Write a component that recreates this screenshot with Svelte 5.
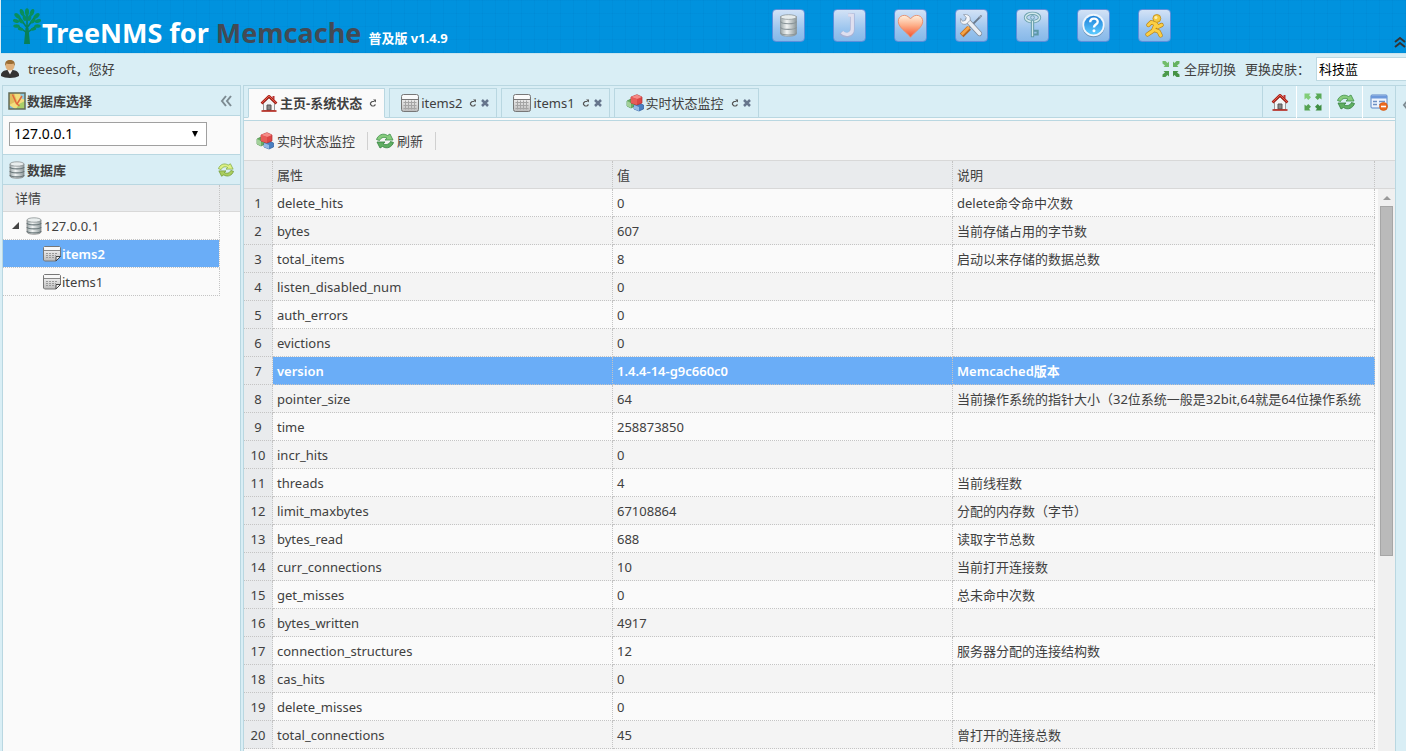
<script lang="ts">
  interface Row {
    name: string;
    value: string;
    note: string;
  }

  const rows: Row[] = [
    { name: "delete_hits", value: "0", note: "delete命令命中次数" },
    { name: "bytes", value: "607", note: "当前存储占用的字节数" },
    { name: "total_items", value: "8", note: "启动以来存储的数据总数" },
    { name: "listen_disabled_num", value: "0", note: "" },
    { name: "auth_errors", value: "0", note: "" },
    { name: "evictions", value: "0", note: "" },
    { name: "version", value: "1.4.4-14-g9c660c0", note: "Memcached版本" },
    { name: "pointer_size", value: "64", note: "当前操作系统的指针大小（32位系统一般是32bit,64就是64位操作系统" },
    { name: "time", value: "258873850", note: "" },
    { name: "incr_hits", value: "0", note: "" },
    { name: "threads", value: "4", note: "当前线程数" },
    { name: "limit_maxbytes", value: "67108864", note: "分配的内存数（字节）" },
    { name: "bytes_read", value: "688", note: "读取字节总数" },
    { name: "curr_connections", value: "10", note: "当前打开连接数" },
    { name: "get_misses", value: "0", note: "总未命中次数" },
    { name: "bytes_written", value: "4917", note: "" },
    { name: "connection_structures", value: "12", note: "服务器分配的连接结构数" },
    { name: "cas_hits", value: "0", note: "" },
    { name: "delete_misses", value: "0", note: "" },
    { name: "total_connections", value: "45", note: "曾打开的连接总数" },
  ];

  const shortcuts = [
    { icon: "bigdb", label: "数据库" },
    { icon: "json", label: "JSON" },
    { icon: "heart", label: "收藏" },
    { icon: "tools", label: "配置" },
    { icon: "key", label: "密码" },
    { icon: "help", label: "帮助" },
    { icon: "exit", label: "退出" },
  ];

  const tabs = [
    { icon: "home", title: "主页-系统状态", closable: false },
    { icon: "table", title: "items2", closable: true },
    { icon: "table", title: "items1", closable: true },
    { icon: "cubes", title: "实时状态监控", closable: true },
  ];

  const tabTools = [
    { icon: "home", label: "主页" },
    { icon: "expand", label: "全屏" },
    { icon: "refresh", label: "刷新" },
    { icon: "closeform", label: "关闭" },
  ];

  let activeTab = $state(0);
  let selected = $state(6);
  let treeNode = $state("items2");
</script>

{#snippet icon(name: string)}
  {#if name === "home"}
    <svg class="icon" viewBox="0 0 18 18">
      <path d="M3.500 9v7.500h11V9L9 4z" fill="#f4f4f4" stroke="#999" />
      <path d="M12.500 2h2v4l-2-2z" fill="#b33" />
      <path d="M1.500 9.500L9 2.300l7.500 7.200" fill="none" stroke="#a51d14" stroke-width="2.600" stroke-linejoin="round" />
      <path d="M2 8.800L9 2.100l7 6.700" fill="none" stroke="#e8604f" stroke-width="1" />
      <path d="M7 16V11h4v5z" fill="#888" stroke="#555" />
      <path d="M1.500 17h15" stroke="#b4251b" stroke-width="1.600" />
    </svg>
  {:else if name === "table"}
    <svg class="icon" viewBox="0 0 18 18">
      <rect x=".5" y=".5" width="17" height="17" rx="2" fill="url(#silver)" stroke="#777" />
      <rect x="2" y="1.500" width="14" height="3.500" fill="#fafafa" />
      <path d="M1 5.500h16" stroke="#777" />
      <path d="M2.500 8.500h13M2.500 11.500h13M2.500 14.500h13M4.500 6.500v9M7.500 6.500v9M10.500 6.500v9M13.500 6.500v9" stroke="#a5a5a5" />
    </svg>
  {:else if name === "sheet"}
    <svg class="icon" viewBox="0 0 18 18">
      <path d="M1.500 1.500h15l1 1v9l-4.500 4.500H1.500l-1-1V2.500z" fill="url(#silver)" stroke="#777" />
      <path d="M2 2h14v3H2z" fill="#f8f8f8" />
      <path d="M1 5.500h16" stroke="#888" />
      <path d="M3 8.500h11M3 10.500h10M3 12.500h8" stroke="#999" stroke-dasharray="2 1" />
      <path d="M17.500 11.500h-4.500v4.500z" fill="#eee" stroke="#444" />
    </svg>
  {:else if name === "cubes"}
    <svg class="icon" viewBox="0 0 18 18">
      <path d="M1 7l4-2 4 2v5l-4 2-4-2z" fill="#69ad62" stroke="#458944" stroke-width=".7" />
      <path d="M1 7l4 2v5l-4-2z" fill="#a3d19a" />
      <path d="M8 11l5-2 4.500 2v4L13 17l-5-2z" fill="#4a7fc2" stroke="#2c5b9c" stroke-width=".7" />
      <path d="M8 11l5 2v4l-5-2z" fill="#94b9e5" />
      <path d="M5 3l6-2.300L16 3v6l-5 2-6-2z" fill="#dc4646" stroke="#b13131" stroke-width=".7" />
      <path d="M5 3l6 2 5-2-5-2.300z" fill="#f58b87" />
      <path d="M5 3l6 2v6L5 9z" fill="#e75c58" />
    </svg>
  {:else if name === "refresh" || name === "reload"}
    <svg class="icon" class:lime={name === "reload"} viewBox="0 0 18 18">
      <path d="M.500 7.500C2 3 7 .500 11.500 3.500l2.500-1.500L17 8H9l2-1.700C8 4.500 5 5.500 3.500 8.500z" fill="#86cb7c" stroke="#3e8f49" stroke-width=".8" stroke-linejoin="round" />
      <path d="M17.500 10.500C16 15 11 17.500 6.500 14.500L4 16 1 10h8l-2 1.700c3 1.800 6 .8 7.500-2.200z" fill="#5fae62" stroke="#34823f" stroke-width=".8" stroke-linejoin="round" />
    </svg>
  {:else if name === "expand"}
    <svg class="icon" viewBox="0 0 18 18">
      <path d="M.500.500h6L5 2.300l2 2-2.700 2.700-2-2L.500 6.500z" fill="#82cd78" />
      <path d="M17.500.500h-6L13 2.300l-2 2 2.700 2.700 2-2 1.800 1.500z" fill="#5aa957" />
      <path d="M.500 17.500h6L5 15.700l2-2-2.700-2.700-2 2-1.800-1.500z" fill="#55a353" />
      <path d="M17.500 17.500h-6l1.500-1.800-2-2 2.700-2.700 2 2 1.800-1.500z" fill="#3e8d41" />
    </svg>
  {:else if name === "shrink"}
    <svg class="icon" viewBox="0 0 18 18">
      <path d="M7 7H1.500L3 5.500.500 3.500V1h3l2 2L7 1.500z" fill="#72bd6c" />
      <path d="M11 7h5.500L15 5.500l2.500-2V1h-3l-2 2L11 1.500z" fill="#66b261" />
      <path d="M7 11H1.500L3 12.500l-2.500 2V17h3l2-2L7 16.500z" fill="#4c9a4c" />
      <path d="M11 11h5.500L15 12.500l2.500 2V17h-3l-2-2-1.500 1.500z" fill="#459245" />
    </svg>
  {:else if name === "closeform"}
    <svg class="icon" viewBox="0 0 18 18">
      <rect x="1" y="2" width="16" height="13" rx="1" fill="#eef4fd" stroke="#5b86c7" />
      <path d="M1 2.500h16v3H1z" fill="#6d99db" />
      <path d="M3 8.500h4M3 11.500h4M9 8.500h6M9 11.500h4" stroke="#6c8fc4" stroke-width="1.500" />
      <circle cx="13.500" cy="13.500" r="4" fill="#ed6a1d" stroke="#d0500c" stroke-width=".6" />
      <path d="M11 13.500h5" stroke="#fff" stroke-width="1.600" />
    </svg>
  {:else if name === "db"}
    <svg class="icon" viewBox="0 0 18 18">
      <path d="M2 3v12c0 3 14 3 14 0V3z" fill="url(#steel)" stroke="#888" stroke-width=".8" />
      <path d="M2 6c0 2.500 14 2.500 14 0M2 10c0 2.500 14 2.500 14 0M2 14c0 2.500 14 2.500 14 0" fill="none" stroke="#69777a" stroke-width="1.200" />
      <ellipse cx="9" cy="3" rx="7" ry="2.200" fill="#e9eeee" stroke="#8b9394" stroke-width=".8" />
    </svg>
  {:else if name === "map"}
    <svg class="icon" viewBox="0 0 18 18">
      <path d="M1 1h16v16H1z" fill="#f2de7d" />
      <path d="M1 1h5l3 8-8 4z" fill="#e0bd5e" />
      <path d="M12 1h5v7l-4-2z" fill="#8fc9e0" />
      <path d="M17 9v8H8l3-5z" fill="#a9cf68" />
      <path d="M1 13l6 4H1z" fill="#7cb8d8" />
      <path d="M4.500 2.500l4 9 3 2.500M14 4l-5 8" fill="none" stroke="#e2683c" stroke-width="1.500" />
      <path d="M1 1h16v16H1z" fill="none" stroke="#616b58" stroke-width="1.500" />
    </svg>
  {:else if name === "user"}
    <svg class="icon" viewBox="0 0 18 18">
      <path d="M0 16c-.5-4 3-5.500 6-6h6c3 .5 6.500 2 6 6-4 2.500-14 2.500-18 0z" fill="#333" />
      <path d="M6.500 10L9 14.500l2.500-4.500z" fill="#f4f4f4" />
      <circle cx="9" cy="6" r="4.500" fill="#dfb07a" />
      <path d="M4.300 6C3.500 1.500 6 0 9 0s5.500 1.500 4.700 6l-1.200-2.500c-2 .7-5 .7-7 0z" fill="#9a6d33" />
    </svg>
  {:else if name === "bigdb"}
    <svg class="big" viewBox="0 0 33 33">
      <path d="M8 7v18c0 4 17 4 17 0V7z" fill="url(#steel)" stroke="#8c9599" stroke-width=".8" />
      <path d="M8 12c0 3.500 17 3.500 17 0M8 18c0 3.500 17 3.500 17 0M8 24c0 3.500 17 3.500 17 0" fill="none" stroke="#8a9599" stroke-width="1.200" />
      <ellipse cx="16.500" cy="7.500" rx="8.500" ry="2.500" fill="#e7ecec" stroke="#8b9394" stroke-width=".8" />
    </svg>
  {:else if name === "json"}
    <svg class="big" viewBox="0 0 33 33">
      <path d="M15 5.500h4" stroke="#a9b3d6" stroke-width="4" />
      <path d="M19.500 3.500v17c0 7-8 8-12 3.500" fill="none" stroke="#a7b2d5" stroke-width="5" />
      <path d="M15 5.500h4M19.500 4v16.500c0 6-7.500 7-11 3" fill="none" stroke="#dfdfef" stroke-width="3.500" />
    </svg>
  {:else if name === "heart"}
    <svg class="big" viewBox="0 0 33 33">
      <path d="M16.500 29C12 23 4 19 3.500 12.500 3 5.500 12 3 16.500 9.500 21 3 30 5.500 29.500 12.500 29 19 21 23 16.500 29z" fill="url(#heart)" stroke="#e8906e" />
    </svg>
  {:else if name === "tools"}
    <svg class="big" viewBox="0 0 33 33">
      <path d="M27 6L14 19" stroke="#69798c" stroke-width="2" />
      <path d="M14 19l-8 8" stroke="#b76620" stroke-width="5.500" />
      <path d="M14 18l-8 8" stroke="#f6a445" stroke-width="3" />
      <path d="M12 11l13 14" stroke="#7e8997" stroke-width="5.500" stroke-linecap="round" />
      <path d="M12 11l13 14" stroke="#e9eef4" stroke-width="4" stroke-linecap="round" />
      <path d="M8 5l3 3-1 3-3 1-2-3c-1 5 2 7 6 6l4-4c1-4-2-7-7-6z" fill="#f3f6fa" stroke="#7e8997" stroke-width=".7" />
      <path d="M28 5l-4 2 2 2z" fill="#98a6b7" />
    </svg>
  {:else if name === "key"}
    <svg class="big" viewBox="0 0 33 33">
      <ellipse cx="16.500" cy="8" rx="7.500" ry="4.500" fill="none" stroke="#6ba0ac" stroke-width="3.500" />
      <ellipse cx="16.500" cy="8" rx="7.500" ry="4.500" fill="none" stroke="#d2e8ec" stroke-width="1.600" />
      <path d="M16.500 11.500V29" stroke="#5d98a7" stroke-width="3.500" />
      <path d="M18 22h4v4h-4" fill="none" stroke="#5d98a7" stroke-width="2.200" />
      <path d="M16.500 11.500V28" stroke="#d2e8ec" stroke-width="1.400" />
      <circle cx="16.500" cy="8" r="2" fill="none" stroke="#6ba0ac" />
    </svg>
  {:else if name === "help"}
    <svg class="big" viewBox="0 0 33 33">
      <circle cx="16.500" cy="17" r="12" fill="#6d93b5" />
      <circle cx="16.500" cy="16" r="12" fill="#eef6fd" />
      <circle cx="16.500" cy="16" r="10" fill="url(#help)" />
      <path d="M13 13c0-5 8-5 8-.5 0 3-4 3-4 6" fill="none" stroke="#fff" stroke-width="2.500" />
      <circle cx="17" cy="22" r="1.600" fill="#fff" />
    </svg>
  {:else if name === "exit"}
    <svg class="big" viewBox="0 0 33 33">
      <path d="M18 15l-5-2-3 3M18 15l2 3 4-2M18 15l-3 7-6 4M16 21l5 2 2 4" fill="none" stroke="#b98316" stroke-width="4.600" stroke-linecap="round" stroke-linejoin="round" />
      <circle cx="19" cy="9" r="4.200" fill="#f5ca3d" stroke="#b98316" stroke-width=".8" />
      <path d="M18 15l-5-2-3 3M18 15l2 3 4-2M18 15l-3 7-6 4M16 21l5 2 2 4" fill="none" stroke="#fbcf45" stroke-width="3.200" stroke-linecap="round" stroke-linejoin="round" />
      <circle cx="18" cy="8" r="1.600" fill="#fdeeb0" />
    </svg>
  {/if}
{/snippet}

<svg class="defs" aria-hidden="true">
  <defs>
    <linearGradient id="silver" x2="0" y2="1">
      <stop stop-color="#fff" /><stop offset="1" stop-color="#bbb" />
    </linearGradient>
    <linearGradient id="steel">
      <stop stop-color="#9ba6a8" /><stop offset=".4" stop-color="#f1f4f4" /><stop offset="1" stop-color="#8c9799" />
    </linearGradient>
    <linearGradient id="heart" x2="0" y2="1">
      <stop stop-color="#fff0dd" /><stop offset=".45" stop-color="#fdb08a" /><stop offset="1" stop-color="#f4512c" />
    </linearGradient>
    <linearGradient id="help" x2="0" y2="1">
      <stop stop-color="#1d7fd8" /><stop offset="1" stop-color="#5ccbff" />
    </linearGradient>
  </defs>
</svg>

<div class="app">
  <header class="banner">
    <svg class="tree" viewBox="0 0 28 36">
      <g fill="none" stroke="#088057" stroke-width="1.500">
        <path d="M14 34V14M14 25L5 18M14 25l9-7M14 20L7 10M14 20l7-10M14 14V5" />
      </g>
      <path d="M11 36l1.500-16h3L17 36z" fill="#088057" />
      <g fill="#088e5c">
        <ellipse cx="14" cy="4" rx="2" ry="3.700" />
        <ellipse cx="9" cy="4.500" rx="2" ry="3.700" transform="rotate(-20 9 4.500)" />
        <ellipse cx="19" cy="4.500" rx="2" ry="3.700" transform="rotate(20 19 4.500)" />
        <ellipse cx="4.500" cy="8" rx="2" ry="3.700" transform="rotate(-50 4.500 8)" />
        <ellipse cx="23.500" cy="8" rx="2" ry="3.700" transform="rotate(50 23.500 8)" />
        <ellipse cx="3" cy="13" rx="1.800" ry="3.200" transform="rotate(-70 3 13)" />
        <ellipse cx="25" cy="13" rx="1.800" ry="3.200" transform="rotate(70 25 13)" />
        <ellipse cx="3.500" cy="18" rx="1.800" ry="3.200" transform="rotate(-90 3.500 18)" />
        <ellipse cx="24.500" cy="18" rx="1.800" ry="3.200" transform="rotate(90 24.500 18)" />
        <ellipse cx="11.500" cy="10" rx="1.800" ry="3" transform="rotate(-15 11.500 10)" />
        <ellipse cx="16.500" cy="10" rx="1.800" ry="3" transform="rotate(15 16.500 10)" />
        <ellipse cx="8" cy="13" rx="1.800" ry="3" transform="rotate(-50 8 13)" />
        <ellipse cx="20" cy="13" rx="1.800" ry="3" transform="rotate(50 20 13)" />
        <ellipse cx="7.500" cy="21" rx="1.600" ry="2.800" transform="rotate(-80 7.500 21)" />
        <ellipse cx="20.500" cy="21" rx="1.600" ry="2.800" transform="rotate(80 20.500 21)" />
      </g>
    </svg>
    <h1>TreeNMS for <span class="product">Memcache</span> <small>普及版 v1.4.9</small></h1>
    <nav class="shortcuts">
      {#each shortcuts as s}
        <button class="shortcut" aria-label={s.label}>{@render icon(s.icon)}</button>
      {/each}
    </nav>
    <button class="fold" aria-label="收起">
      <svg viewBox="0 0 12 12"><path d="M1 6l5-4 5 4M1 11l5-4 5 4" fill="none" stroke="#333" stroke-width="2" /></svg>
    </button>
  </header>

  <div class="userbar">
    {@render icon("user")}
    <span class="hello">treesoft，您好</span>
    <button class="fullscreen">{@render icon("shrink")}全屏切换</button>
    <label for="skin">更换皮肤：</label>
    <select id="skin"><option>科技蓝</option></select>
  </div>

  <div class="body">
    <aside>
      <div class="panel-head">
        {@render icon("map")}<span>数据库选择</span>
        <button class="fold" aria-label="折叠">
          <svg viewBox="0 0 12 12"><path d="M6 1L2 6l4 5M11 1L7 6l4 5" fill="none" stroke="#7d8b92" stroke-width="2" /></svg>
        </button>
      </div>
      <div class="picker">
        <select class="host" aria-label="数据库选择"><option>127.0.0.1</option></select>
      </div>
      <div class="panel-head sub">
        {@render icon("db")}<span>数据库</span>
        <button class="fold" aria-label="刷新">{@render icon("reload")}</button>
      </div>
      <div class="tree-head"><span>详情</span></div>
      <ul class="tree-body">
        <li class="root">
          <svg class="arrow" viewBox="0 0 8 8"><path d="M8 0v8H0z" fill="#444" /></svg>
          {@render icon("db")}127.0.0.1
        </li>
        {#each ["items2", "items1"] as node}
          <li>
            <button class="leaf" class:on={treeNode === node} onclick={() => (treeNode = node)}>
              {@render icon("sheet")}{node}
            </button>
          </li>
        {/each}
      </ul>
    </aside>

    <main>
      <div class="tabbar">
        <div class="tabs">
          {#each tabs as tab, i}
            <div class="tab" class:active={activeTab === i}>
              <button class="tab-title" onclick={() => (activeTab = i)}>{@render icon(tab.icon)}{tab.title}</button>
              <button class="mini" aria-label="刷新">
                <svg viewBox="0 0 8 8"><path d="M5.500 2.500H3L1.500 4v1.500L3 7h2l1.500-1.500" fill="none" stroke="#555" stroke-width="1.200" /><path d="M4 .500h3v3z" fill="#555" /></svg>
              </button>
              {#if tab.closable}
                <button class="mini close" aria-label="关闭">
                  <svg viewBox="0 0 8 8"><path d="M1 1l6 6M7 1L1 7" stroke="#66758c" stroke-width="2.500" /></svg>
                </button>
              {/if}
            </div>
          {/each}
        </div>
        <div class="tab-tools">
          {#each tabTools as t}
            <button aria-label={t.label}>{@render icon(t.icon)}</button>
          {/each}
        </div>
      </div>

      <div class="toolbar">
        <button>{@render icon("cubes")}实时状态监控</button>
        <button>{@render icon("refresh")}刷新</button>
      </div>

      <div class="grid">
        <table>
          <colgroup>
            <col class="c-num" /><col class="c-val" /><col class="c-val" /><col />
          </colgroup>
          <thead>
            <tr><th></th><th>属性</th><th>值</th><th>说明</th></tr>
          </thead>
          <tbody>
            {#each rows as row, i}
              <tr class:on={selected === i} onclick={() => (selected = i)}>
                <td class="num">{i + 1}</td>
                <td>{row.name}</td>
                <td>{row.value}</td>
                <td>{row.note}</td>
              </tr>
            {/each}
          </tbody>
        </table>
        <div class="gutter">
          <div class="gutter-head"></div>
          <div class="scrollbar">
            <svg viewBox="0 0 8 4"><path d="M0 4l4-4 4 4z" fill="#999" /></svg>
            <div class="thumb"></div>
          </div>
        </div>
      </div>
    </main>

    <div class="east">
      <svg viewBox="0 0 12 12"><path d="M6 1L2 6l4 5M11 1L7 6l4 5" fill="none" stroke="#7d8b92" stroke-width="2" /></svg>
    </div>
  </div>
</div>

<style>
  :global(body) {
    background: #d9eef5;
  }

  .app {
    height: 100vh;
    display: flex;
    flex-direction: column;
    overflow: hidden;
    padding-left: 1px;
    box-sizing: border-box;
    font: 13px/20px "Noto Sans", "Noto Sans CJK SC", sans-serif;
    color: #404040;
  }

  .app * {
    box-sizing: border-box;
  }

  .defs {
    position: absolute;
    width: 0;
    height: 0;
  }

  button {
    display: flex;
    align-items: center;
    padding: 0;
    border: none;
    background: none;
    font: inherit;
    color: inherit;
    cursor: pointer;
    white-space: nowrap;
  }

  select {
    appearance: none;
    font: inherit;
    color: #000;
    background: #fff;
    border-radius: 0;
  }

  .icon {
    width: 18px;
    height: 18px;
    flex: none;
  }

  .icon.lime {
    filter: hue-rotate(-35deg) brightness(1.25);
  }

  .banner {
    display: flex;
    align-items: flex-start;
    height: 53px;
    flex: none;
    background-color: #0092de;
    background-image:
      linear-gradient(rgba(0, 70, 130, 0.04) 1px, transparent 1px),
      linear-gradient(90deg, rgba(0, 70, 130, 0.04) 1px, transparent 1px);
    background-size: 13px 13px;
  }

  .tree {
    width: 28px;
    height: 36px;
    margin: 8px 1px 0 12px;
  }

  h1 {
    margin: 14px 0 0;
    font-size: 27px;
    line-height: 38px;
    font-weight: 700;
    color: #fff;
    white-space: nowrap;
  }

  .product {
    color: #434a54;
  }

  small {
    font-size: 13px;
  }

  .shortcuts {
    display: flex;
    gap: 28px;
    margin: 9px 223px 0 auto;
  }

  .shortcut {
    width: 33px;
    height: 33px;
    border: 1px solid #5c8fdb;
    border-radius: 4px;
    background: linear-gradient(#d3e2f6, #9cc5ee 60%, #86b8e8);
  }

  .big {
    width: 31px;
    height: 31px;
  }

  .fold svg {
    width: 12px;
    height: 12px;
  }

  .banner .fold {
    margin-top: 36px;
  }

  .userbar {
    display: flex;
    align-items: center;
    height: 32px;
    flex: none;
    padding-bottom: 2px;
    border-top: 1px solid #c8e4ee;
    background: #d9eef5;
  }

  .hello {
    margin: 0 auto 0 9px;
  }

  .fullscreen {
    gap: 4px;
    margin-right: 9px;
  }

  .userbar label {
    width: 71px;
    white-space: nowrap;
  }

  #skin {
    width: 90px;
    height: 24px;
    padding: 0 2px;
    border: 1px solid #bdd9e2;
    border-right: none;
  }

  .body {
    display: flex;
    flex: 1;
    min-height: 0;
  }

  aside {
    width: 239px;
    flex: none;
    margin-left: 1px;
    border: 1px solid #b9d7e1;
    border-bottom: none;
    background: #fafafa;
  }

  .panel-head {
    display: flex;
    align-items: center;
    gap: 1px;
    height: 30px;
    padding: 0 8px 0 5px;
    border-bottom: 1px solid #b9d7e1;
    background: #d9eef5;
    font-weight: 700;
  }

  .panel-head .fold {
    margin-left: auto;
  }

  .panel-head .fold :global(.icon) {
    width: 16px;
    height: 16px;
  }

  .panel-head.sub {
    height: 31px;
    border-top: 1px solid #b9d7e1;
    padding: 0 6px 0 5px;
  }

  .picker {
    height: 38px;
    padding: 6px;
  }

  .host {
    width: 198px;
    height: 24px;
    padding: 0 4px;
    border: 1px solid #a0a0a0;
    font-size: 14px;
    background: #fff
      url("data:image/svg+xml,%3Csvg xmlns='http://www.w3.org/2000/svg' viewBox='0 0 8 8'%3E%3Cpath d='M1 1h6L4 7z'/%3E%3C/svg%3E")
      no-repeat right 7px center / 8px 8px;
  }

  .tree-head {
    height: 27px;
    border-bottom: 1px solid #d8d8d8;
    background: #e9ebed;
  }

  .tree-head span {
    display: block;
    width: 217px;
    height: 26px;
    padding: 3px 12px;
    border-right: 1px dotted #c4c4c4;
  }

  .tree-body {
    width: 217px;
    margin: 0;
    padding: 0;
    list-style: none;
  }

  .tree-body li {
    height: 28px;
    border-bottom: 1px dotted #c4c4c4;
    border-right: 1px dotted #c4c4c4;
  }

  .root {
    display: flex;
    align-items: center;
    padding-left: 9px;
    gap: 1px;
  }

  .arrow {
    width: 7px;
    height: 7px;
    margin-right: 5px;
  }

  .leaf {
    width: 100%;
    height: 27px;
    padding-left: 40px;
    gap: 1px;
  }

  .leaf.on {
    background: #6aadf7;
    color: #fff;
    font-weight: 600;
  }

  main {
    display: flex;
    flex-direction: column;
    flex: 1;
    min-width: 0;
    margin-left: 2px;
    border: 1px solid #b9d7e1;
    border-bottom: none;
    background: #fafafa;
  }

  .tabbar {
    display: flex;
    justify-content: space-between;
    height: 35px;
    flex: none;
    border-bottom: 1px solid #b9d7e1;
    background: linear-gradient(#d9eef5 31px, #b9d7e1 31px, #b9d7e1 32px, #fafafa 32px);
  }

  .tabs {
    display: flex;
    gap: 4px;
    padding: 2px 4px;
  }

  .tab {
    display: flex;
    align-items: center;
    gap: 7px;
    height: 30px;
    padding: 0 7px 0 11px;
    border: 1px solid #b9d7e1;
  }

  .tab.active {
    background: #fafafa;
    border-bottom-color: #fafafa;
    font-weight: 700;
  }

  .tab-title {
    gap: 2px;
  }

  .mini svg {
    width: 8px;
    height: 8px;
  }

  .mini.close {
    margin-left: -3px;
  }

  .tab-tools {
    display: flex;
    height: 32px;
    border-left: 1px solid #b9d7e1;
  }

  .tab-tools button {
    justify-content: center;
    width: 33px;
  }

  .tab-tools button + button {
    border-left: 1px solid #fff;
  }

  .toolbar {
    display: flex;
    align-items: center;
    height: 40px;
    flex: none;
    padding-left: 12px;
    border-bottom: 1px solid #d8d8d8;
    background: #f4f4f4;
  }

  .toolbar button {
    gap: 3px;
    height: 18px;
    padding-right: 12px;
    margin-right: 8px;
    border-right: 1px solid #d0d0d0;
  }

  .grid {
    display: flex;
    flex: 1;
    min-height: 0;
    overflow: hidden;
  }

  table {
    flex: 1;
    width: 0;
    align-self: flex-start;
    table-layout: fixed;
    border-collapse: separate;
    border-spacing: 0;
  }

  .c-num {
    width: 29px;
  }

  .c-val {
    width: 340px;
  }

  th,
  td {
    height: 28px;
    padding: 0 4px;
    border-right: 1px dotted #c4c4c4;
    border-bottom: 1px dotted #c4c4c4;
    text-align: left;
    white-space: nowrap;
    overflow: hidden;
  }

  th {
    font-weight: 400;
    background: #e9ebed;
    border-bottom: 1px solid #d8d8d8;
  }

  tbody tr:nth-child(even) {
    background: #f4f4f4;
  }

  tbody tr.on {
    background: #6aadf7;
    color: #fff;
    font-weight: 600;
  }

  td.num {
    padding: 0;
    text-align: center;
    background: #e9ebed;
    font-weight: 400;
    color: #404040;
  }

  .gutter {
    display: flex;
    flex-direction: column;
    width: 20px;
    flex: none;
  }

  .gutter-head {
    height: 28px;
    background: #e9ebed;
    border-bottom: 1px solid #d8d8d8;
  }

  .scrollbar {
    display: flex;
    flex-direction: column;
    align-items: center;
    gap: 6px;
    flex: 1;
    margin-left: 3px;
    padding-top: 7px;
    background: #f0f0f0;
  }

  .scrollbar svg {
    width: 8px;
    height: 4px;
  }

  .thumb {
    width: 13px;
    height: 63%;
    border: 1px solid #a6a6a6;
    background: #bababa;
  }

  .east {
    width: 10px;
    flex: none;
    padding: 10px 0 0 6px;
    border-top: 1px solid #b9d7e1;
    background: #d9eef5;
    overflow: hidden;
  }

  .east svg {
    width: 12px;
    height: 12px;
  }
</style>
